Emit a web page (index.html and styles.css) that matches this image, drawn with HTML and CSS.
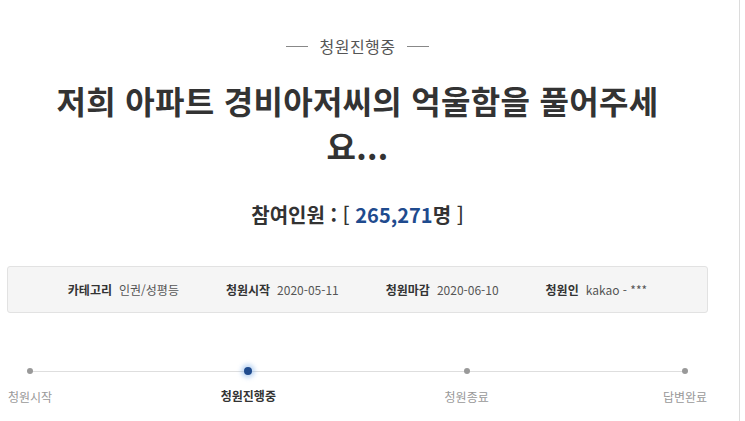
FILE: index.html
```html
<!DOCTYPE html>
<html lang="ko">
<head>
<meta charset="utf-8">
<title>청원진행중</title>
<link rel="stylesheet" href="styles.css">
</head>
<body>
<div class="page">
  <main class="main">
    <div class="status"><span class="dash"></span><span class="status-text">청원진행중</span><span class="dash"></span></div>
    <h1 class="title">저희 아파트 경비아저씨의 억울함을 풀어주세요...</h1>
    <p class="count">참여인원 : <span class="br">[</span> <span class="num">265,271</span>명 <span class="br">]</span></p>
    <ul class="info">
      <li class="info-item"><strong>카테고리</strong><span>인권/성평등</span></li>
      <li class="info-item"><strong>청원시작</strong><span>2020-05-11</span></li>
      <li class="info-item"><strong>청원마감</strong><span>2020-06-10</span></li>
      <li class="info-item"><strong>청원인</strong><span>kakao - ***</span></li>
    </ul>
    <ol class="steps">
      <li class="step"><span class="dot"></span><span class="label">청원시작</span></li>
      <li class="step active"><span class="dot"></span><span class="label">청원진행중</span></li>
      <li class="step"><span class="dot"></span><span class="label">청원종료</span></li>
      <li class="step"><span class="dot"></span><span class="label">답변완료</span></li>
    </ol>
  </main>
  <aside class="side"></aside>
</div>
</body>
</html>
```

FILE: styles.css
```css
* { box-sizing: border-box; }
html, body { margin: 0; padding: 0; background: #fff; }
body {
  font-family: "Noto Sans CJK KR", "Noto Sans", sans-serif;
  color: #333;
}
.page {
  display: flex;
  height: 421px;
  overflow: hidden;
}
.main {
  width: 701px;
  margin-left: 7px;
  padding-top: 34px;
}
.side {
  margin-left: 31px;
  width: 6px;
  border-left: 1px solid #dcdcdc;
}
.status {
  display: flex;
  justify-content: center;
  align-items: center;
  gap: 11px;
  height: 24px;
  font-size: 16px;
  color: #555;
}
.status-text { letter-spacing: 0.5px; line-height: 24px; }
.dash { width: 22px; height: 1px; background: #888; }
.title {
  margin: 20px 0 0;
  padding: 0 40px;
  text-align: center;
  font-size: 32px;
  line-height: 45px;
  font-weight: 700;
  color: #333;
  letter-spacing: 0.3px;
}
.count {
  margin: 33px 0 0;
  text-align: center;
  font-size: 20px;
  line-height: 28px;
  font-weight: 700;
  color: #333;
}
.count .br { font-weight: 500; }
.count .num { color: #1f4b8e; }
.info {
  list-style: none;
  margin: 37px 0 0;
  padding: 0;
  height: 47px;
  display: flex;
  justify-content: center;
  align-items: center;
  gap: 47px;
  background: #f5f5f5;
  border: 1px solid #e2e2e2;
  border-radius: 3px;
  font-size: 12px;
}
.info-item { display: flex; gap: 7px; align-items: center; }
.info-item strong { font-weight: 700; color: #333; }
.info-item span { color: #555; }
.steps {
  list-style: none;
  margin: 53px 0 0;
  padding: 0;
  display: flex;
  justify-content: space-between;
  position: relative;
}
.steps::before {
  content: "";
  position: absolute;
  left: 22px;
  right: 22px;
  top: 5px;
  height: 1px;
  background: #dedede;
}
.step {
  width: 46px;
  display: flex;
  flex-direction: column;
  align-items: center;
  gap: 14px;
  position: relative;
}
.dot {
  width: 6px;
  height: 6px;
  margin-top: 2px;
  border-radius: 50%;
  background: #999;
  position: relative;
}
.label {
  white-space: nowrap;
  font-size: 12px;
  line-height: 18px;
  color: #999;
}
.step.active .dot {
  width: 8px;
  height: 8px;
  margin-top: 1px;
  margin-bottom: -2px;
  background: #1f4b8e;
  box-shadow: 0 0 4px 3px rgba(120, 170, 230, 0.45);
}
.step.active .label { color: #333; font-weight: 700; }
```
